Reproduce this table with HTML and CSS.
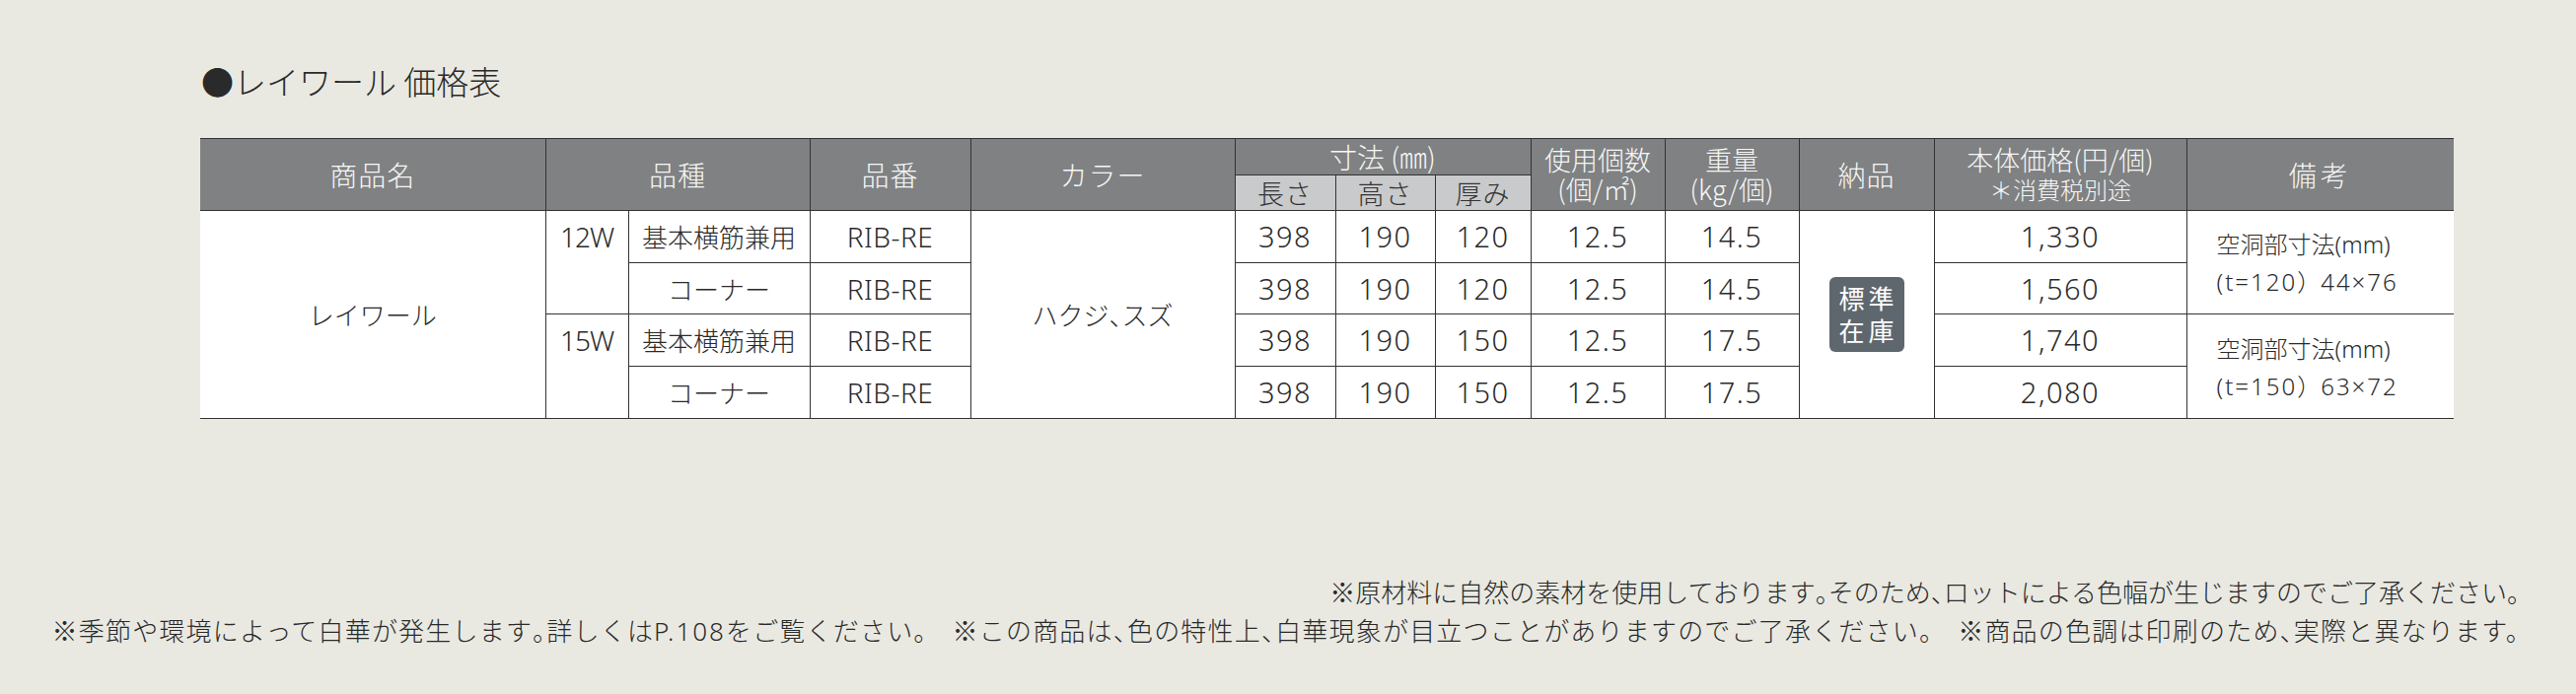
FILE: index.html
```html
<!DOCTYPE html>
<html lang="ja">
<head>
<meta charset="utf-8">
<title>レイワール 価格表</title>
<link rel="stylesheet" href="styles.css">
</head>
<body>
<div class="page">
  <h1 class="title">●レイワール 価格表</h1>
  <table class="price">
    <colgroup>
      <col class="c-name"><col class="c-w"><col class="c-kind"><col class="c-code"><col class="c-color">
      <col class="c-len"><col class="c-hei"><col class="c-thk"><col class="c-use"><col class="c-wt">
      <col class="c-dlv"><col class="c-price"><col class="c-note">
    </colgroup>
    <thead>
      <tr class="h1">
        <th rowspan="2">商品名</th>
        <th colspan="2" rowspan="2">品種</th>
        <th rowspan="2">品番</th>
        <th rowspan="2">カラー</th>
        <th colspan="3" class="dim">寸法 (㎜)</th>
        <th rowspan="2" class="two"><span class="ln">使用個数</span><span class="ln">(個/㎡)</span></th>
        <th rowspan="2" class="two"><span class="ln">重量</span><span class="ln">(kg/個)</span></th>
        <th rowspan="2">納品</th>
        <th rowspan="2" class="two"><span class="ln">本体価格(円/個)</span><span class="ln tax">＊消費税別途</span></th>
        <th rowspan="2" class="wide">備考</th>
      </tr>
      <tr class="h2">
        <th class="sub">長さ</th>
        <th class="sub">高さ</th>
        <th class="sub">厚み</th>
      </tr>
    </thead>
    <tbody>
      <tr>
        <td rowspan="4" class="jp">レイワール</td>
        <td rowspan="2" class="w">12W</td>
        <td class="jp">基本横筋兼用</td>
        <td class="code">RIB-RE</td>
        <td rowspan="4" class="jp">ハクジ<span class="half">、</span>スズ</td>
        <td class="num">398</td><td class="num">190</td><td class="num">120</td>
        <td class="num">12.5</td><td class="num">14.5</td>
        <td rowspan="4" class="dlv"><span class="badge"><span>標</span><span>準</span><span>在</span><span>庫</span></span></td>
        <td class="yen">1,330</td>
        <td rowspan="2" class="note"><span class="ln">空洞部寸法(mm)</span><span class="ln dims">(t=120<span class="fw">）</span>44×76</span></td>
      </tr>
      <tr>
        <td class="jp">コーナー</td>
        <td class="code">RIB-RE</td>
        <td class="num">398</td><td class="num">190</td><td class="num">120</td>
        <td class="num">12.5</td><td class="num">14.5</td>
        <td class="yen">1,560</td>
      </tr>
      <tr>
        <td rowspan="2" class="w">15W</td>
        <td class="jp">基本横筋兼用</td>
        <td class="code">RIB-RE</td>
        <td class="num">398</td><td class="num">190</td><td class="num">150</td>
        <td class="num">12.5</td><td class="num">17.5</td>
        <td class="yen">1,740</td>
        <td rowspan="2" class="note"><span class="ln">空洞部寸法(mm)</span><span class="ln dims">(t=150<span class="fw">）</span>63×72</span></td>
      </tr>
      <tr>
        <td class="jp">コーナー</td>
        <td class="code">RIB-RE</td>
        <td class="num">398</td><td class="num">190</td><td class="num">150</td>
        <td class="num">12.5</td><td class="num">17.5</td>
        <td class="yen">2,080</td>
      </tr>
    </tbody>
  </table>
  <div class="notes">
    <p>※原材料に自然の素材を使用しております<span class="half">。</span>そのため<span class="half">、</span>ロットによる色幅が生じますのでご了承ください。</p>
    <p class="long">※季節や環境によって白華が発生します<span class="half">。</span>詳しくは<span class="lat">P.108</span>をご覧ください。<span class="gap"></span>※この商品は<span class="half">、</span>色の特性上<span class="half">、</span>白華現象が目立つことがありますのでご了承ください。<span class="gap"></span>※商品の色調は印刷のため<span class="half">、</span>実際と異なります。</p>
  </div>
</div>
</body>
</html>
```
FILE: styles.css
```css
html, body {
  margin: 0;
  padding: 0;
  background: #e9e9e2;
}
.page {
  width: 2612px;
  height: 704px;
  overflow: hidden;
  font-family: "Noto Sans", "Noto Sans CJK JP", sans-serif;
  font-weight: 300;
  color: #2b2b2b;
}
.title {
  margin: 0;
  padding: 61px 0 0 204px;
  font-family: "Noto Sans CJK JP", sans-serif;
  font-weight: 300;
  font-size: 33px;
  line-height: 42px;
  color: #2a2a2a;
}
.price {
  margin: 37px 0 0 203px;
  width: 2285px;
  table-layout: fixed;
  border-collapse: collapse;
  border-top: 1.5px solid #2a2a2a;
  border-bottom: 1.5px solid #2a2a2a;
  background: #ffffff;
}
.c-name { width: 350px; }
.c-w { width: 84px; }
.c-kind { width: 184px; }
.c-code { width: 163px; }
.c-color { width: 268px; }
.c-len { width: 102px; }
.c-hei { width: 101px; }
.c-thk { width: 97px; }
.c-use { width: 136px; }
.c-wt { width: 136px; }
.c-dlv { width: 137px; }
.c-price { width: 256px; }
.c-note { width: 271px; }

.price th, .price td {
  border: 1px solid #333333;
  padding: 0;
  text-align: center;
  vertical-align: middle;
  white-space: nowrap;
}
.price tr > :first-child { border-left: none; }
.price tr > :last-child { border-right: none; }
.price .h2 > :last-child { border-right: 1px solid #333333; }

.price th {
  background: #7f8182;
  color: #f6f6f6;
  font-family: "Noto Sans CJK JP", sans-serif;
  font-weight: 300;
  font-size: 28px;
  line-height: 34px;
  letter-spacing: 1px;
}
.price th.wide { letter-spacing: 4px; }
.price .h1 { height: 37px; }
.price .h2 { height: 36px; }
.price th.dim {
  font-size: 28px;
  line-height: 34px;
  letter-spacing: 0;
}
.price th.sub {
  background: #c9cacb;
  color: #333333;
  font-size: 27px;
  line-height: 34px;
  letter-spacing: 1px;
}
.price th.two {
  font-size: 27px;
  letter-spacing: 0;
}
.ln {
  display: block;
  height: 30px;
  line-height: 30px;
}
.price .tax { font-size: 24px; }

.price tbody tr { height: 52.7px; }
.price td {
  font-size: 26px;
  line-height: 34px;
  color: #2b2b2b;
}
.price td.jp {
  font-family: "Noto Sans CJK JP", sans-serif;
}
.half {
  font-feature-settings: "halt";
  font-family: "Noto Sans CJK JP", sans-serif;
}
.price td.w {
  vertical-align: top;
  line-height: 53px;
  font-size: 28px;
  letter-spacing: -1px;
}
.price td.code {
  font-size: 28px;
  letter-spacing: 0.5px;
}
.price td.num {
  font-size: 29px;
  letter-spacing: 1.5px;
}
.price td.yen {
  font-size: 29px;
  letter-spacing: 1.5px;
}
.price td.note {
  text-align: left;
  padding-left: 30px;
  font-size: 24px;
}
.price td.note .ln {
  height: 37px;
  line-height: 37px;
}
.price td.note .dims {
  letter-spacing: 2px;
}
.fw {
  font-family: "Noto Sans CJK JP", sans-serif;
  letter-spacing: 0;
}
.badge {
  display: inline-grid;
  grid-template-columns: 30px 30px;
  grid-template-rows: 33px 33px;
  box-sizing: border-box;
  width: 76px;
  height: 76px;
  padding: 5px 8px;
  align-items: center;
  justify-items: center;
  background: #5f676e;
  border-radius: 6px;
  color: #ffffff;
  font-family: "Noto Sans CJK JP", sans-serif;
  font-size: 26px;
  line-height: 30px;
  font-weight: 400;
  vertical-align: middle;
}
.notes {
  margin-top: 155px;
  padding-right: 44px;
  text-align: right;
  font-family: "Noto Sans CJK JP", sans-serif;
  font-weight: 300;
  font-size: 26px;
  line-height: 39px;
  color: #2a2a2a;
}
.notes p {
  margin: 0;
  white-space: nowrap;
}
.notes p.long {
  letter-spacing: 1.2px;
}
.notes .lat {
  font-family: "Noto Sans", sans-serif;
  letter-spacing: 2px;
}
.notes .gap {
  display: inline-block;
  width: 12px;
}
```
